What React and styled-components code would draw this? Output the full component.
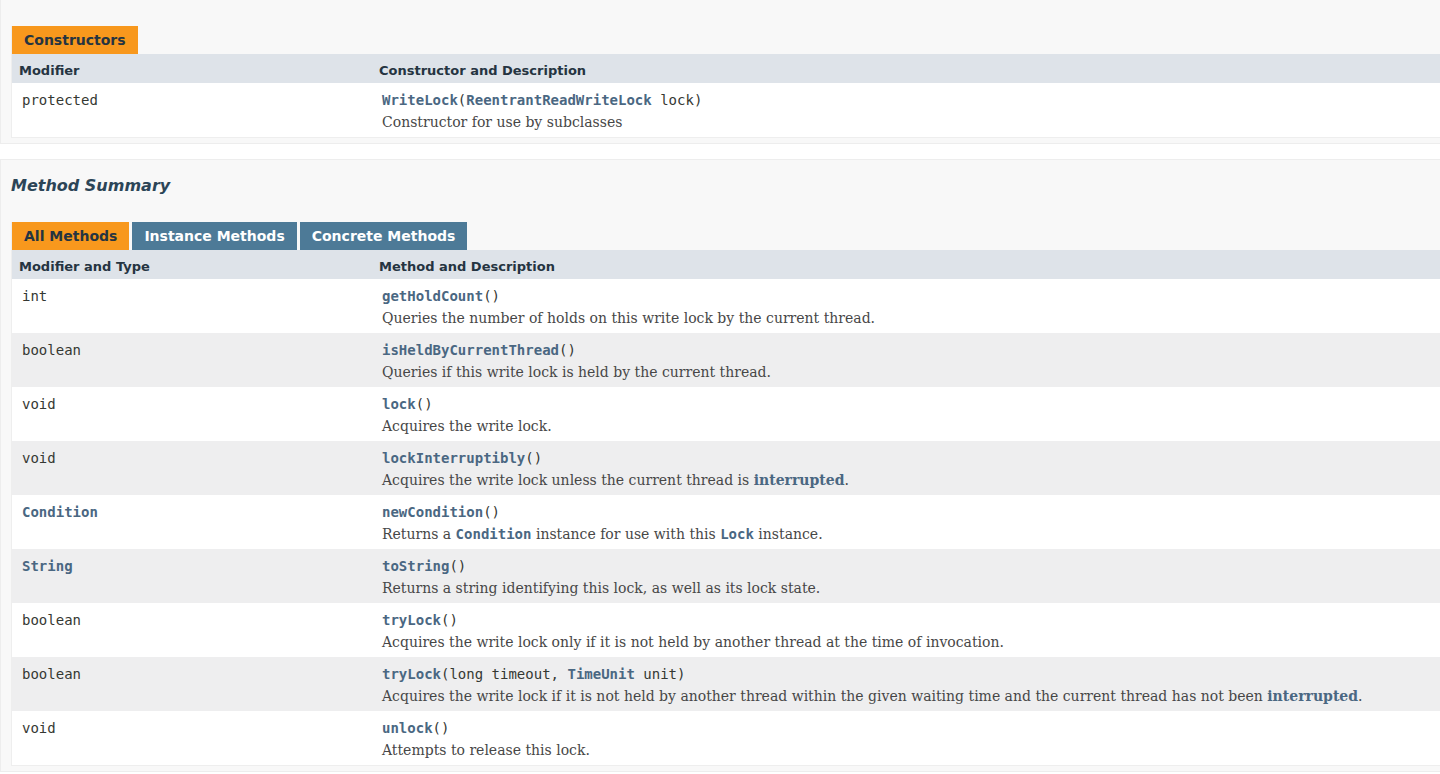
import React from "react";
import styled, { createGlobalStyle } from "styled-components";

const Global = createGlobalStyle`
  html, body { margin: 0; padding: 0; background: #ffffff; overflow: hidden; }
  body { font-family: "DejaVu Sans", Arial, sans-serif; font-size: 14px; color: #353833; }
`;

const Page = styled.div`
  width: 1474px;
`;

const Box = styled.section`
  border: 1px solid #ededed;
  border-top-width: ${(p) => (p.$continued ? "0" : "1px")};
  background: #f8f8f8;
  padding: ${(p) => (p.$continued ? "26px" : "0")} 20px 5px 10px;
  margin-bottom: 15px;
`;

const Heading = styled.h3`
  margin: 15px 0 25px 0;
  font-family: "DejaVu Sans", Arial, sans-serif;
  font-size: 16px;
  line-height: 22px;
  font-style: italic;
  font-weight: bold;
  color: #2c4557;
`;

const Table = styled.div`
  border-left: 1px solid #eeeeee;
  border-right: 1px solid #eeeeee;
  border-bottom: 1px solid #eeeeee;
`;

const Tabs = styled.div`
  display: flex;
  gap: 3px;
`;

const Tab = styled.span`
  display: block;
  height: 28px;
  box-sizing: border-box;
  padding: 6px 12px 6px 12px;
  font-family: "DejaVu Sans", Arial, sans-serif;
  font-size: 14px;
  line-height: 16px;
  font-weight: bold;
  white-space: nowrap;
  background: ${(p) => (p.$active ? "#f8981d" : "#4d7a97")};
  color: ${(p) => (p.$active ? "#253441" : "#ffffff")};
`;

const Row = styled.div`
  display: grid;
  grid-template-columns: 360px 1fr;
  background: ${(p) => (p.$alt ? "#eeeeef" : "#ffffff")};
`;

const HeadRow = styled(Row)`
  background: #dee3e9;
`;

const Th = styled.div`
  padding: 8px 3px 3px 7px;
  font-family: "DejaVu Sans", Arial, sans-serif;
  font-size: 13px;
  line-height: 18px;
  font-weight: bold;
  color: #253441;
  white-space: nowrap;
`;

const Td = styled.div`
  padding: 7px 3px 5px 10px;
`;

const Code = styled.code`
  display: block;
  font-family: "DejaVu Sans Mono", "Liberation Mono", monospace;
  font-size: 14px;
  line-height: 20px;
  color: #353833;
  white-space: nowrap;
`;

const Link = styled.span`
  color: #4a6782;
  font-weight: bold;
`;

const InlineCode = styled.code`
  font-family: "DejaVu Sans Mono", "Liberation Mono", monospace;
  font-size: 14px;
  color: #4a6782;
  font-weight: bold;
`;

const Block = styled.div`
  padding-top: 2px;
  font-family: "DejaVu Serif", Georgia, "Liberation Serif", serif;
  font-size: 14px;
  line-height: 20px;
  color: #474747;
  white-space: nowrap;
`;

const methods = [
  { type: "int", name: "getHoldCount", desc: <>Queries the number of holds on this write lock by the current thread.</> },
  { type: "boolean", name: "isHeldByCurrentThread", desc: <>Queries if this write lock is held by the current thread.</> },
  { type: "void", name: "lock", desc: <>Acquires the write lock.</> },
  { type: "void", name: "lockInterruptibly", desc: <>Acquires the write lock unless the current thread is <Link>interrupted</Link>.</> },
  { type: "Condition", typeLink: true, name: "newCondition", desc: <>Returns a <InlineCode>Condition</InlineCode> instance for use with this <InlineCode>Lock</InlineCode> instance.</> },
  { type: "String", typeLink: true, name: "toString", desc: <>Returns a string identifying this lock, as well as its lock state.</> },
  { type: "boolean", name: "tryLock", desc: <>Acquires the write lock only if it is not held by another thread at the time of invocation.</> },
  { type: "boolean", name: "tryLock", timed: true, desc: <>Acquires the write lock if it is not held by another thread within the given waiting time and the current thread has not been <Link>interrupted</Link>.</> },
  { type: "void", name: "unlock", desc: <>Attempts to release this lock.</> },
];

export default function App() {
  return (
    <>
      <Global />
      <Page>
        <Box $continued>
          <Table>
            <Tabs>
              <Tab $active>Constructors</Tab>
            </Tabs>
            <HeadRow>
              <Th>Modifier</Th>
              <Th>Constructor and Description</Th>
            </HeadRow>
            <Row>
              <Td>
                <Code>protected</Code>
              </Td>
              <Td>
                <Code>
                  <Link>WriteLock</Link>(<Link>ReentrantReadWriteLock</Link>&nbsp;lock)
                </Code>
                <Block>Constructor for use by subclasses</Block>
              </Td>
            </Row>
          </Table>
        </Box>
        <Box>
          <Heading>Method Summary</Heading>
          <Table>
            <Tabs>
              <Tab $active>All Methods</Tab>
              <Tab>Instance Methods</Tab>
              <Tab>Concrete Methods</Tab>
            </Tabs>
            <HeadRow>
              <Th>Modifier and Type</Th>
              <Th>Method and Description</Th>
            </HeadRow>
            {methods.map((m, i) => (
              <Row key={i} $alt={i % 2 === 1}>
                <Td>
                  <Code>{m.typeLink ? <Link>{m.type}</Link> : m.type}</Code>
                </Td>
                <Td>
                  <Code>
                    <Link>{m.name}</Link>
                    {m.timed ? (
                      <>
                        (long&nbsp;timeout, <Link>TimeUnit</Link>&nbsp;unit)
                      </>
                    ) : (
                      "()"
                    )}
                  </Code>
                  <Block>{m.desc}</Block>
                </Td>
              </Row>
            ))}
          </Table>
        </Box>
      </Page>
    </>
  );
}
